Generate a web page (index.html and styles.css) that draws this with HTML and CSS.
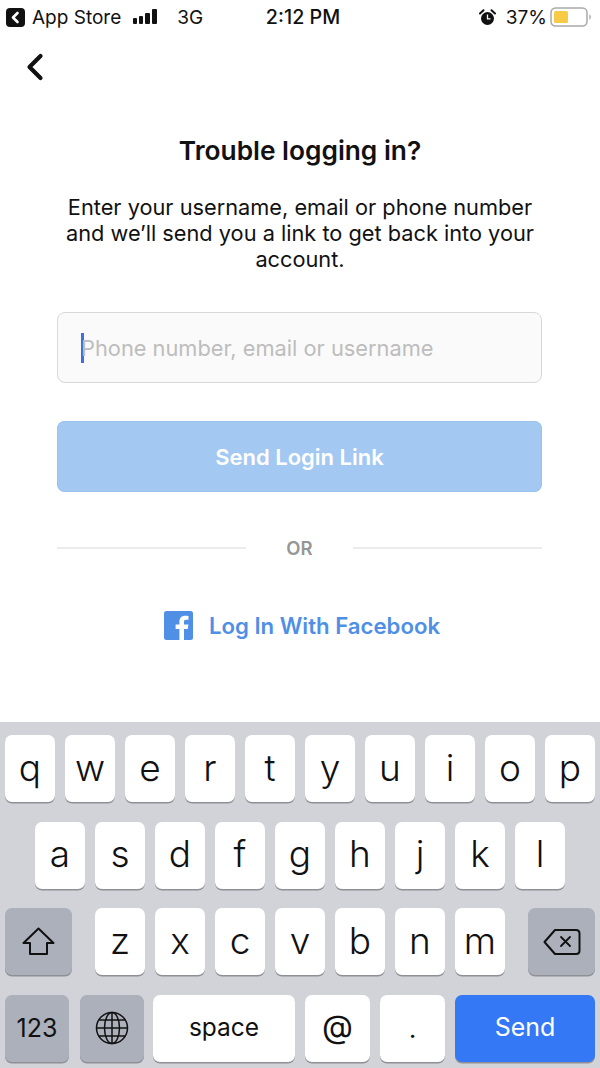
FILE: index.html
```html
<!DOCTYPE html>
<html lang="en">
<head>
    <meta charset="UTF-8">
    <meta name="viewport" content="width=device-width, initial-scale=1.0">
    <title>Trouble logging in?</title>
    <link rel="stylesheet" href="styles.css">
</head>
<body>
    <div class="phone">
        <!-- status bar -->
        <div class="status">
            <div class="status-left">
                <svg class="back-app" width="19" height="19" viewBox="0 0 19 19"><rect x="0" y="0" width="19" height="19" rx="4" fill="#111"/><path d="M11.5 5 L7 9.5 L11.5 14" fill="none" stroke="#fff" stroke-width="2.6" stroke-linecap="round" stroke-linejoin="round"/></svg>
                <span class="app-name">App Store</span>
                <svg class="signal" width="28" height="16" viewBox="0 0 28 16"><rect x="0" y="9" width="4" height="6" rx="1" fill="#111"/><rect x="6" y="7" width="4" height="8" rx="1" fill="#111"/><rect x="12" y="4" width="5" height="11" rx="1" fill="#111"/><rect x="19" y="0" width="5" height="15" rx="1" fill="#111"/></svg>
                <span class="net">3G</span>
            </div>
            <div class="status-time">2:12 PM</div>
            <div class="status-right">
                <svg class="alarm" width="17" height="17" viewBox="0 0 17 17"><circle cx="8.5" cy="9.5" r="6.5" fill="#111"/><path d="M8.5 5.5 V9.8 H11.5" fill="none" stroke="#fff" stroke-width="1.3"/><path d="M1 4.5 L4.5 1.2 M16 4.5 L12.5 1.2" stroke="#111" stroke-width="2" stroke-linecap="round"/></svg>
                <span class="pct">37%</span>
                <svg class="battery" width="42" height="20" viewBox="0 0 42 20"><rect x="1" y="1" width="36" height="18" rx="4.5" fill="#fff" stroke="#a9a9a9" stroke-width="1.5"/><rect x="4" y="4" width="14" height="12" rx="1.5" fill="#f7cb45"/><path d="M39.5 7.5 C41 8 41 12 39.5 12.5 Z" fill="#8a8a8a"/></svg>
            </div>
        </div>

        <div class="nav">
            <svg width="18" height="28" viewBox="0 0 18 28"><path d="M14.5 3 L3.5 14 L14.5 25" fill="none" stroke="#111" stroke-width="4.2" stroke-linecap="round" stroke-linejoin="round"/></svg>
        </div>

        <div class="content">
            <h1 class="title">Trouble logging in?</h1>
            <p class="desc">Enter your username, email or phone number and we’ll send you a link to get back into your account.</p>
            <div class="field"><span class="caret"></span><span class="placeholder">Phone number, email or username</span></div>
            <div class="send-link">Send Login Link</div>
            <div class="or-row"><span class="or-line"></span><span class="or-text">OR</span><span class="or-line"></span></div>
            <div class="fb-row">
                <svg width="29" height="29" viewBox="0 0 29 29"><rect width="29" height="29" rx="2.5" fill="#4f8fe6"/><path d="M20 29 V18 H23.8 L24.4 13.6 H20 V10.9 C20 9.6 20.4 8.8 22.2 8.8 H24.5 V4.9 C24.1 4.8 22.7 4.7 21.1 4.7 C17.7 4.7 15.4 6.8 15.4 10.5 V13.6 H11.6 V18 H15.4 V29 Z" fill="#fff"/></svg>
                <span class="fb-text">Log In With Facebook</span>
            </div>
        </div>

        <!-- keyboard -->
        <div class="keyboard">
            <div class="kb-row">
                <div class="key">q</div><div class="key">w</div><div class="key">e</div><div class="key">r</div><div class="key">t</div><div class="key">y</div><div class="key">u</div><div class="key">i</div><div class="key">o</div><div class="key">p</div>
            </div>
            <div class="kb-row kb-row-center">
                <div class="key">a</div><div class="key">s</div><div class="key">d</div><div class="key">f</div><div class="key">g</div><div class="key">h</div><div class="key">j</div><div class="key">k</div><div class="key">l</div>
            </div>
            <div class="kb-row kb-row-third">
                <div class="key key-gray key-shift">
                    <svg width="33" height="29" viewBox="0 0 33 29"><path d="M16.5 1.500 L31.500 16 H25 V27 H8 V16 H1.500 Z" fill="none" stroke="#111" stroke-width="2" stroke-linejoin="round"/></svg>
                </div>
                <div class="letters">
                    <div class="key">z</div><div class="key">x</div><div class="key">c</div><div class="key">v</div><div class="key">b</div><div class="key">n</div><div class="key">m</div>
                </div>
                <div class="key key-gray key-shift">
                    <svg width="38" height="28" viewBox="0 0 38 28"><path d="M12 2 H33 Q36.500 2 36.500 5.500 V22.500 Q36.500 26 33 26 H12 L1.500 14 Z" fill="none" stroke="#111" stroke-width="2" stroke-linejoin="round"/><path d="M18 9 L27 18 M27 9 L18 18" stroke="#111" stroke-width="1.800" stroke-linecap="round"/></svg>
                </div>
            </div>
            <div class="kb-row kb-row-bottom">
                <div class="key key-gray key-num">123</div>
                <div class="key key-gray key-num">
                    <svg width="34" height="34" viewBox="0 0 34 34" fill="none" stroke="#111" stroke-width="1.5"><circle cx="17" cy="17" r="15.500"/><ellipse cx="17" cy="17" rx="7.500" ry="15.500"/><path d="M17 1.500 V32.500 M1.500 17 H32.500 M4 9 H30 M4 25 H30"/></svg>
                </div>
                <div class="key key-space">space</div>
                <div class="key key-mid">@</div>
                <div class="key key-mid key-dot">.</div>
                <div class="key key-send">Send</div>
            </div>
        </div>
    </div>
</body>
</html>
```

FILE: styles.css
```css
* {
    box-sizing: border-box;
}
html, body {
    margin: 0;
    padding: 0;
}
body {
    font-family: "Inter", "Liberation Sans", sans-serif;
    color: #111;
    background: #fff;
}
.phone {
    width: 600px;
    height: 1068px;
    display: flex;
    flex-direction: column;
    overflow: hidden;
}

/* status bar */
.status {
    height: 34px;
    padding: 0 8px 0 6px;
    display: grid;
    grid-template-columns: 1fr auto 1fr;
    align-items: center;
    font-size: 19px;
}
.status-left, .status-right {
    display: flex;
    align-items: center;
}
.status-right {
    justify-content: flex-end;
}
.app-name {
    margin-left: 7px;
}
.signal {
    margin-left: 12px;
}
.net {
    margin-left: 16px;
}
.status-time {
    font-size: 19.700px;
    font-weight: 500;
    padding-left: 8px;
}
.pct {
    margin-left: 10px;
}
.battery {
    margin-left: 3px;
}

.nav {
    height: 50px;
    padding: 19px 0 0 26px;
}

.content {
    height: 638px;
    padding: 0 57px 0 57px;
    display: flex;
    flex-direction: column;
    align-items: stretch;
}
.title {
    margin: 51px 0 0;
    font-size: 26.300px;
    line-height: 32px;
    font-weight: 600;
    text-align: center;
}
.desc {
    margin: 27px -4px 0;
    font-size: 21.750px;
    line-height: 26px;
    text-align: center;
}
.field {
    margin-top: 40px;
    height: 71px;
    width: 485px;
    border: 1px solid #d8d8d8;
    border-radius: 8px;
    background: #fafafa;
    display: flex;
    align-items: center;
    padding-left: 23px;
    font-size: 21.800px;
}
.caret {
    width: 3px;
    height: 30px;
    background: #3d6fe0;
}
.placeholder {
    color: #bdbdbd;
    margin-left: -3px;
}
.send-link {
    margin-top: 38px;
    height: 71px;
    width: 485px;
    border-radius: 8px;
    background: #a3c9f3;
    box-shadow: inset 0 0 0 1px #9cc3ee;
    color: #fff;
    font-size: 22px;
    font-weight: 600;
    display: flex;
    align-items: center;
    justify-content: center;
}
.or-row {
    margin-top: 45px;
    height: 22px;
    width: 485px;
    display: flex;
    align-items: center;
    gap: 40px;
}
.or-line {
    flex: 1;
    height: 2px;
    background: #ececec;
}
.or-text {
    color: #969696;
    font-size: 18.500px;
    font-weight: 600;
}
.fb-row {
    margin-top: 52px;
    padding-left: 4px;
    display: flex;
    align-items: center;
    justify-content: center;
    gap: 16px;
}
.fb-text {
    color: #4f8fe6;
    font-size: 22.200px;
    font-weight: 600;
}

/* keyboard */
.keyboard {
    flex: 1;
    background: #d1d3d9;
    padding: 13px 5px 0;
    display: flex;
    flex-direction: column;
    gap: 19.500px;
}
.kb-row {
    display: flex;
    gap: 10px;
    height: 67px;
}
.kb-row-center {
    padding: 0 30px;
}
.kb-row-third {
    justify-content: space-between;
}
.letters {
    display: flex;
    gap: 10px;
}
.key {
    width: 50px;
    height: 67px;
    border-radius: 7px;
    background: #fff;
    box-shadow: 0 1.500px 0 #8e9096;
    display: flex;
    align-items: center;
    justify-content: center;
    font-size: 37px;
    font-weight: 300;
    line-height: 1;
    padding-bottom: 3px;
}
.key-gray {
    background: #abb0bb;
}
.key-shift {
    width: 67px;
    padding-bottom: 0;
}
.key-num {
    width: 64px;
    font-size: 25px;
    font-weight: 400;
    padding-bottom: 0;
}
.kb-row-bottom .key-num:nth-child(2) {
    margin-left: 1px;
}
.key-space {
    width: 142px;
    margin-left: -1px;
    font-size: 24.500px;
    font-weight: 400;
    padding-bottom: 1px;
}
.key-mid {
    width: 65px;
    font-size: 32px;
    font-weight: 400;
}
.key-dot {
    font-size: 25px;
    padding-top: 6px;
}
.key-send {
    width: 140px;
    background: #3478f6;
    color: #fff;
    font-size: 25px;
    font-weight: 400;
    padding-bottom: 1px;
}
```
